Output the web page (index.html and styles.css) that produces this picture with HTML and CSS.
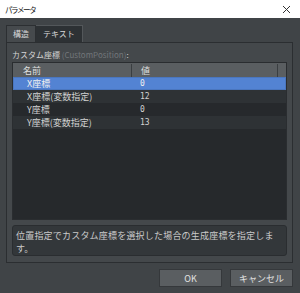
FILE: index.html
```html
<!DOCTYPE html>
<html lang="ja">
<head>
  <meta charset="UTF-8">
  <title>パラメータ</title>
  <link rel="stylesheet" href="styles.css">
</head>
<body>
  <div class="titlebar">
    <span class="title">パラメータ</span>
    <svg class="close" width="9" height="9" viewBox="0 0 9 9">
      <path d="M1 1 L8 8 M8 1 L1 8" stroke="#333" stroke-width="1"/>
    </svg>
  </div>

  <div class="dialog">
    <div class="tabs">
      <div class="tab active">構造</div>
      <div class="tab">テキスト</div>
    </div>

    <div class="panel">
      <div class="label">カスタム座標 <span class="dim">(CustomPosition)</span>:</div>

      <div class="table">
        <div class="row head">
          <div class="cell name">名前</div>
          <div class="cell value">値</div>
          <div class="cell rest"></div>
        </div>
        <div class="row selected">
          <div class="cell name">X座標</div>
          <div class="cell value num">0</div>
        </div>
        <div class="row odd">
          <div class="cell name">X座標(変数指定)</div>
          <div class="cell value num">12</div>
        </div>
        <div class="row">
          <div class="cell name">Y座標</div>
          <div class="cell value num">0</div>
        </div>
        <div class="row odd">
          <div class="cell name">Y座標(変数指定)</div>
          <div class="cell value num">13</div>
        </div>
      </div>

      <div class="desc">位置指定でカスタム座標を選択した場合の生成座標を指定します。</div>
    </div>

    <div class="buttons">
      <button class="btn">OK</button>
      <button class="btn">キャンセル</button>
    </div>
  </div>
</body>
</html>
```

FILE: styles.css
```css
body {
  margin: 0;
  width: 300px;
  height: 293px;
  background-color: #404447;
  font-family: "Noto Sans CJK JP", "Noto Sans", sans-serif;
  color: #d6d6d6;
  overflow: hidden;
}
.titlebar {
  height: 18px;
  background-color: #fff;
  display: flex;
  align-items: center;
  justify-content: space-between;
  padding: 0 9px 0 5px;
}
.title {
  font-size: 7.5px;
  letter-spacing: -1.4px;
  color: #111;
}
.dialog {
  padding: 7px 7px 0 6px;
}
/* タブ */
.tabs {
  display: flex;
  height: 17px;
}
.tab {
  font-size: 8px;
  line-height: 16px;
  padding: 0 7px;
  background-color: #2d3134;
  border: 1px solid #53575a;
  border-bottom: none;
  border-left: none;
  color: #d8d8d8;
  white-space: nowrap;
}
.tab.active {
  padding: 0 6px;
  background-color: #464a4d;
  border: 1px solid #2c2f32;
  border-bottom: none;
}
/* パネル */
.panel {
  height: 209px;
  border: 1px solid #2b2e31;
  background-color: #44484b;
  padding: 5px;
  display: flex;
  flex-direction: column;
}
.label {
  font-size: 8px;
  line-height: 14px;
  color: #d4d4d4;
  white-space: nowrap;
}
.label .dim {
  color: #72767a;
}
.table {
  height: 158px;
  flex-shrink: 0;
  background-color: #26292c;
  border: 1px solid #2a2d30;
  box-sizing: border-box;
}
.row {
  display: flex;
  height: 13px;
  align-items: center;
  font-size: 9px;
  color: #d2d2d2;
  white-space: nowrap;
}
.row.head {
  height: 14px;
  background-color: #5a5e61;
  color: #dedede;
}
.row.odd {
  background-color: #2e3235;
}
.row.selected {
  background-color: #5383d3;
  color: #f0f0f0;
  box-shadow: inset 0 0 0 1px #4a76bf;
}
.cell {
  line-height: 13px;
}
.cell.name {
  width: 104px;
  padding-left: 14px;
}
.head .cell.name {
  width: 108px;
  padding-left: 10px;
  border-right: 1px solid #3a3e41;
}
.cell.value {
  width: 136px;
  padding-left: 9px;
}
.head .cell.value {
  border-right: 1px solid #3a3e41;
}
.num {
  font-family: "DejaVu Sans Mono", monospace;
  font-size: 8px;
}
.desc {
  margin-top: 5px;
  height: 23px;
  flex-shrink: 0;
  padding: 3px;
  background-color: #33373a;
  border: 1px solid #2a2d30;
  border-radius: 3px;
  font-size: 9px;
  letter-spacing: 0.2px;
  line-height: 13px;
  color: #cacaca;
}
/* ボタン */
.buttons {
  display: flex;
  justify-content: flex-end;
  gap: 8px;
  margin-top: 6px;
}
.btn {
  width: 63px;
  height: 18px;
  padding: 0;
  background-color: #5a5e61;
  border: 1px solid #35383b;
  color: #e2e2e2;
  font-family: "Noto Sans CJK JP", "Noto Sans", sans-serif;
  font-size: 9px;
}
```
